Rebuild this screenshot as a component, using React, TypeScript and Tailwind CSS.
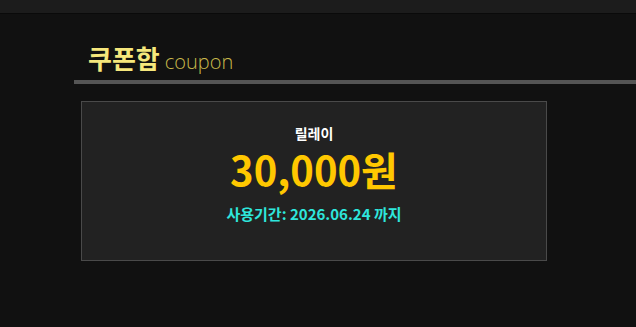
export default function App() {
  return (
    <div
      className="min-h-[327px] w-full bg-[#111111]"
      style={{ fontFamily: '"Noto Sans CJK KR", "Noto Sans", sans-serif' }}
    >
      <div className="h-[14px] border-b border-[#0a0a0a] bg-[#1c1c1c]" />

      <div className="ml-[74px] pt-[31px]">
        <h2 className="flex items-baseline pl-[14px] leading-none">
          <span className="text-[26px] font-bold text-[#f6e77c]">쿠폰함</span>
          <span
            className="ml-[5px] text-[20px] font-light text-[#c9b94b]"
            style={{ fontFamily: '"Open Sans", sans-serif' }}
          >
            coupon
          </span>
        </h2>
        <div className="mt-[8px] h-[4px] bg-[#555555]" />

        <div className="ml-[7px] mt-[17px] flex h-[160px] w-[466px] flex-col items-center border border-[#4a4a4a] bg-[#222222] pt-[21px]">
          <div className="text-[14px] font-bold leading-[20px] text-white">릴레이</div>
          <div className="mt-[3px] text-[40px] font-bold leading-[46px] text-[#ffc800]">
            30,000원
          </div>
          <div className="mt-[12px] text-[15px] font-bold leading-[20px] text-[#2ee6dc]">
            사용기간: 2026.06.24 까지
          </div>
        </div>
      </div>
    </div>
  );
}
